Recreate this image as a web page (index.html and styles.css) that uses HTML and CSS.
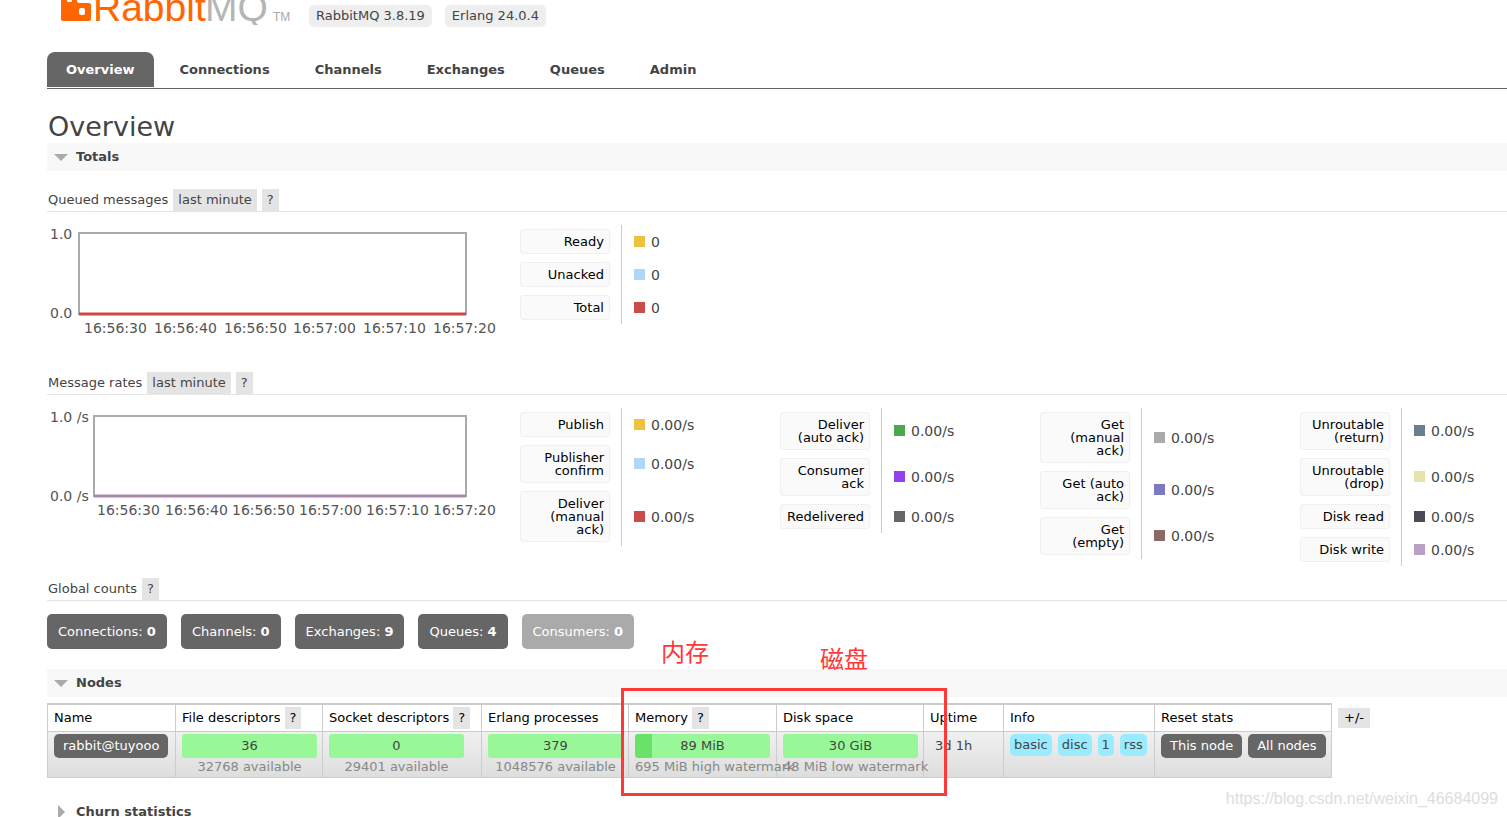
FILE: index.html
```html
<!DOCTYPE html>
<html lang="en">
<head>
  <meta charset="UTF-8">
  <meta name="viewport" content="width=device-width, initial-scale=1.0">
  <title>RabbitMQ Management</title>
  <link rel="stylesheet" href="styles.css">
</head>
<body>
  <header class="header">
    <svg class="logo" width="248" height="25" viewBox="0 0 248 25" role="img" aria-label="RabbitMQ">
      <path class="logo-mark" d="M14 0h6v1q0 1 1 1h3q1 0 1-1V0h5v1q0 2 2 2h10q2 0 2 2v14q0 2-2 2H16q-2 0-2-2zM32 10v3q0 2 2 2h2q2 0 2-2v-3q0-2-2-2h-2q-2 0-2 2z"/>
      <text class="logo-rabbit" x="46" y="21">Rabbit</text>
      <text class="logo-mq" x="158" y="21">MQ</text>
      <text class="logo-tm" x="226" y="21">TM</text>
    </svg>
    <ul class="versions">
      <li>RabbitMQ 3.8.19</li>
      <li>Erlang 24.0.4</li>
    </ul>
  </header>

  <nav class="menu">
    <a class="selected" href="#overview">Overview</a>
    <a href="#connections">Connections</a>
    <a href="#channels">Channels</a>
    <a href="#exchanges">Exchanges</a>
    <a href="#queues">Queues</a>
    <a href="#admin">Admin</a>
  </nav>

  <main class="main">
    <h1>Overview</h1>

    <h2 class="section open">Totals</h2>

    <h3>Queued messages <button class="option">last minute</button> <button class="option">?</button></h3>
    <div class="stats">
      <svg class="chart" width="460" height="135" viewBox="0 0 460 135">
        <rect class="plot" x="32" y="8" width="387" height="81"/>
        <path class="line-total" d="M32 89h387"/>
        <text x="3" y="14">1.0</text>
        <text x="3" y="93">0.0</text>
        <text x="37" y="108">16:56:30</text>
        <text x="107" y="108">16:56:40</text>
        <text x="177" y="108">16:56:50</text>
        <text x="246" y="108">16:57:00</text>
        <text x="316" y="108">16:57:10</text>
        <text x="386" y="108">16:57:20</text>
      </svg>
      <div class="legends">
        <table class="legend">
          <tr><th><span>Ready</span></th><td><i class="swatch yellow"></i>0</td></tr>
          <tr><th><span>Unacked</span></th><td><i class="swatch sky"></i>0</td></tr>
          <tr><th><span>Total</span></th><td><i class="swatch red"></i>0</td></tr>
        </table>
      </div>
    </div>

    <h3>Message rates <button class="option">last minute</button> <button class="option">?</button></h3>
    <div class="stats">
      <svg class="chart" width="460" height="135" viewBox="0 0 460 135">
        <rect class="plot" x="47" y="8" width="372" height="80"/>
        <path class="line-disk" d="M47 88h372"/>
        <text x="3" y="14">1.0 /s</text>
        <text x="3" y="93">0.0 /s</text>
        <text x="50" y="107">16:56:30</text>
        <text x="118" y="107">16:56:40</text>
        <text x="185" y="107">16:56:50</text>
        <text x="252" y="107">16:57:00</text>
        <text x="319" y="107">16:57:10</text>
        <text x="386" y="107">16:57:20</text>
      </svg>
      <div class="legends">
        <table class="legend">
          <tr><th><span>Publish</span></th><td><i class="swatch yellow"></i>0.00/s</td></tr>
          <tr><th><span>Publisher<br>confirm</span></th><td><i class="swatch sky"></i>0.00/s</td></tr>
          <tr><th><span>Deliver<br>(manual<br>ack)</span></th><td><i class="swatch red"></i>0.00/s</td></tr>
        </table>
        <table class="legend">
          <tr><th><span>Deliver<br>(auto ack)</span></th><td><i class="swatch green"></i>0.00/s</td></tr>
          <tr><th><span>Consumer<br>ack</span></th><td><i class="swatch purple"></i>0.00/s</td></tr>
          <tr><th><span>Redelivered</span></th><td><i class="swatch dark"></i>0.00/s</td></tr>
        </table>
        <table class="legend">
          <tr><th><span>Get<br>(manual<br>ack)</span></th><td><i class="swatch grey"></i>0.00/s</td></tr>
          <tr><th><span>Get (auto<br>ack)</span></th><td><i class="swatch violet"></i>0.00/s</td></tr>
          <tr><th><span>Get<br>(empty)</span></th><td><i class="swatch brown"></i>0.00/s</td></tr>
        </table>
        <table class="legend">
          <tr><th><span>Unroutable<br>(return)</span></th><td><i class="swatch slate"></i>0.00/s</td></tr>
          <tr><th><span>Unroutable<br>(drop)</span></th><td><i class="swatch sand"></i>0.00/s</td></tr>
          <tr><th><span>Disk read</span></th><td><i class="swatch ink"></i>0.00/s</td></tr>
          <tr><th><span>Disk write</span></th><td><i class="swatch mauve"></i>0.00/s</td></tr>
        </table>
      </div>
    </div>

    <h3>Global counts <button class="option">?</button></h3>
    <div class="counts">
      <a href="#connections">Connections: <b>0</b></a>
      <a href="#channels">Channels: <b>0</b></a>
      <a href="#exchanges">Exchanges: <b>9</b></a>
      <a href="#queues">Queues: <b>4</b></a>
      <span>Consumers: <b>0</b></span>
    </div>

    <h2 class="section open">Nodes</h2>
    <div class="nodes-wrap">
      <table class="nodes">
        <colgroup>
          <col class="w-name"><col class="w-bar"><col class="w-socket"><col class="w-bar"><col class="w-memory">
          <col class="w-bar"><col class="w-uptime"><col class="w-info"><col class="w-reset">
        </colgroup>
        <thead>
          <tr>
            <th>Name</th>
            <th>File descriptors <button class="option">?</button></th>
            <th>Socket descriptors <button class="option">?</button></th>
            <th>Erlang processes</th>
            <th>Memory <button class="option">?</button></th>
            <th>Disk space</th>
            <th>Uptime</th>
            <th>Info</th>
            <th>Reset stats</th>
          </tr>
        </thead>
        <tbody>
          <tr>
            <td><a class="dark-button" href="#node">rabbit@tuyooo</a></td>
            <td><div class="bar">36</div><div class="limit">32768 available</div></td>
            <td><div class="bar">0</div><div class="limit">29401 available</div></td>
            <td><div class="bar">379</div><div class="limit">1048576 available</div></td>
            <td><div class="bar memory">89 MiB</div><div class="limit wide">695 MiB high watermark</div></td>
            <td><div class="bar">30 GiB</div><div class="limit wide">48 MiB low watermark</div></td>
            <td class="uptime">3d 1h</td>
            <td><div class="tags"><span>basic</span><span>disc</span><span>1</span><span>rss</span></div></td>
            <td><div class="resets"><button class="dark-button">This node</button><button class="dark-button">All nodes</button></div></td>
          </tr>
        </tbody>
      </table>
      <button class="option">+/-</button>
    </div>

    <h2 class="section closed">Churn statistics</h2>
  </main>

  <!-- notes over the page -->
  <div class="note-box"></div>
  <div class="note note-memory" lang="zh">内存</div>
  <div class="note note-disk" lang="zh">磁盘</div>
  <div class="watermark">https://blog.csdn.net/weixin_46684099</div>
</body>
</html>
```
FILE: styles.css
```css
html {
  overflow: hidden;
}
body {
  position: relative;
  margin: 0;
  padding-left: 47px;
  background: #fff;
  color: #444;
  font: 13px/16px "DejaVu Sans", Verdana, sans-serif;
}
button {
  border: 0;
  font: inherit;
  cursor: pointer;
}
a {
  text-decoration: none;
}

/* header */
.header {
  display: flex;
  align-items: flex-start;
  gap: 14px;
  height: 52px;
}
.logo {
  flex: none;
  overflow: hidden;
}
.logo-mark {
  fill: #f60;
  fill-rule: evenodd;
}
.logo-rabbit,
.logo-mq {
  font: 39px "Liberation Sans", Arial, sans-serif;
}
.logo-rabbit {
  fill: #f60;
}
.logo-mq {
  fill: #b5b5b5;
}
.logo-tm {
  fill: #aaa;
  font: 12px "Liberation Sans", Arial, sans-serif;
}
.versions {
  display: flex;
  gap: 13px;
  margin: 5px 0 0;
  padding: 0;
  list-style: none;
}
.versions li {
  padding: 3px 7px;
  border-radius: 5px;
  background: #eee;
}

/* tabs */
.menu {
  display: flex;
  gap: 7px;
  padding-bottom: 1px;
  border-bottom: 1px solid #666;
}
.menu a {
  padding: 10px 19px 9px;
  border-radius: 8px 8px 0 0;
  color: #444;
  font-weight: bold;
}
.menu .selected {
  background: #666;
  color: #fff;
}

/* headings */
h1 {
  margin: 0;
  padding: 22px 0 0 1px;
  font-size: 27px;
  line-height: 32px;
  font-weight: normal;
}
.section {
  display: flex;
  align-items: center;
  gap: 8px;
  height: 28px;
  margin: 0;
  padding-left: 7px;
  font-size: 13px;
}
.section::before {
  content: "";
  border: 7px solid transparent;
}
.open {
  background: #f8f8f8;
}
.open::before {
  border-top-color: #aaa;
  border-bottom-width: 0;
}
.closed::before {
  margin-left: 4px;
  border-left-color: #aaa;
  border-right-width: 0;
}
.closed {
  gap: 11px;
}
h3 {
  display: flex;
  align-items: center;
  gap: 5px;
  margin: 0 0 13px;
  padding-left: 1px;
  border-bottom: 1px solid #e4e4e4;
  font-size: 13px;
  font-weight: normal;
}
.section + h3 {
  margin-top: 18px;
}
.option {
  padding: 3px 5px;
  background: #e4e4e4;
  color: inherit;
}

/* charts and legends */
.stats {
  display: flex;
  align-items: flex-start;
  gap: 12px;
  margin-bottom: 12px;
}
.chart {
  flex: none;
}
.chart text {
  fill: #545454;
  font-size: 14px;
}
.plot {
  fill: none;
  stroke: #aaa;
  stroke-width: 2;
}
.line-total,
.line-disk {
  stroke: #cb4b4b;
  stroke-width: 3;
}
.line-disk {
  stroke: #a78bac;
}
.legends {
  display: flex;
  align-items: flex-start;
}
.legend {
  width: 260px;
  border-spacing: 0;
}
.legend th {
  width: 90px;
  padding: 4px 11px 4px 1px;
  border-right: 1px solid #ccc;
  color: #000;
  font-weight: normal;
  text-align: right;
}
.legend th span {
  display: block;
  padding: 5px;
  border: 1px solid #f0f0f0;
  border-radius: 3px;
  background: #fafafa;
  line-height: 13px;
  white-space: nowrap;
}
.legend td {
  padding: 0 0 0 12px;
  font-size: 14px;
}
.swatch {
  display: inline-block;
  width: 11px;
  height: 11px;
  margin-right: 6px;
}
.yellow { background: #edc240; }
.sky { background: #afd8f8; }
.red { background: #cb4b4b; }
.green { background: #4da74d; }
.purple { background: #9440ed; }
.dark { background: #666; }
.grey { background: #aaa; }
.violet { background: #7c79c3; }
.brown { background: #8e6767; }
.slate { background: #67808d; }
.sand { background: #e5e4ae; }
.ink { background: #4b4a55; }
.mauve { background: #bba0c1; }

/* global counts */
.counts {
  display: flex;
  gap: 14px;
  margin-bottom: 20px;
}
.counts a,
.counts span {
  padding: 10px 11px 9px;
  border-radius: 5px;
  background: #666;
  color: #fff;
}
.counts span {
  background: #aaa;
}

/* nodes */
.nodes-wrap {
  display: flex;
  align-items: flex-start;
  gap: 6px;
  margin: 6px 0 20px;
}
.nodes-wrap > .option {
  margin-top: 5px;
  padding: 2px 6px;
  color: #000;
}
.nodes {
  table-layout: fixed;
  width: 1285px;
  border-collapse: collapse;
  border: 1px solid #ccc;
  border-top-width: 2px;
}
.w-name { width: 128px; }
.w-bar { width: 147px; }
.w-memory { width: 148px; }
.w-socket { width: 159px; }
.w-uptime { width: 80px; }
.w-info { width: 151px; }
.w-reset { width: 177px; }
.nodes th {
  padding: 2px 6px;
  border: 1px solid #ccc;
  color: #000;
  font-weight: normal;
  text-align: left;
  white-space: nowrap;
}
.nodes td {
  padding: 2px 6px;
  border: 1px solid #ccc;
  vertical-align: top;
  white-space: nowrap;
}
.nodes tbody tr {
  background: linear-gradient(#f0f0f0, #ddd);
}
.dark-button {
  display: inline-block;
  padding: 4px 9px;
  border-radius: 5px;
  background: #666;
  color: #fff;
}
.bar {
  width: 135px;
  border-radius: 3px;
  background: #98f898;
  line-height: 24px;
  text-align: center;
}
.memory {
  background: linear-gradient(to right, #6ae26a 17px, #98f898 17px);
}
.limit {
  width: 135px;
  color: #888;
  line-height: 17px;
  text-align: center;
}
.wide {
  text-align: left;
}
.nodes .uptime {
  padding: 6px 11px;
}
.tags,
.resets {
  display: flex;
  gap: 6px;
}
.tags span {
  padding: 3px 4px;
  border-radius: 5px;
  background: #99ebff;
}

/* notes */
.note-box {
  position: absolute;
  top: 688px;
  left: 621px;
  width: 320px;
  height: 102px;
  border: 3px solid #ff3838;
}
.note {
  position: absolute;
  color: #ff3838;
  font: 24px/28px "Noto Sans CJK SC", sans-serif;
}
.note-memory {
  top: 637px;
  left: 661px;
}
.note-disk {
  top: 644px;
  left: 820px;
}
.watermark {
  position: absolute;
  top: 789px;
  right: 9px;
  color: #ddd;
  font: 16px/20px "Liberation Sans", Arial, sans-serif;
}
```
